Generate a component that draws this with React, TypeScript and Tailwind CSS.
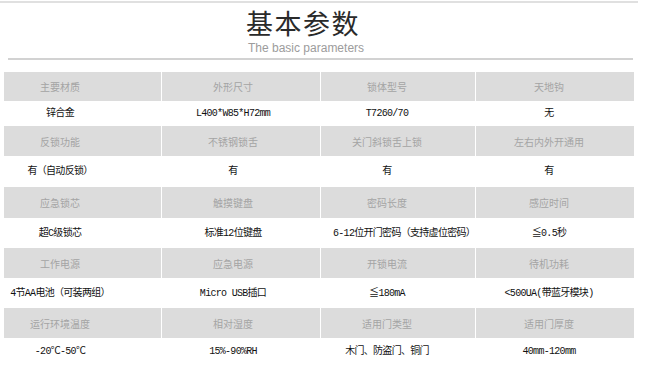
import { Fragment } from 'react';

const rows: string[][][] = [
	[
		['主要材质', '外形尺寸', '锁体型号', '天地钩'],
		['锌合金', 'L400*W85*H72mm', 'T7260/70', '无'],
	],
	[
		['反锁功能', '不锈钢锁舌', '关门斜锁舌上锁', '左右内外开通用'],
		['有（自动反锁）', '有', '有', '有'],
	],
	[
		['应急锁芯', '触摸键盘', '密码长度', '感应时间'],
		['超C级锁芯', '标准12位键盘', '6-12位开门密码（支持虚位密码）', '≦0.5秒'],
	],
	[
		['工作电源', '应急电源', '开锁电流', '待机功耗'],
		['4节AA电池（可装两组）', 'Micro USB插口', '≦180mA', '<500UA(带蓝牙模块)'],
	],
	[
		['运行环境温度', '相对湿度', '适用门类型', '适用门厚度'],
		['-20℃-50℃', '15%-90%RH', '木门、防盗门、铜门', '40mm-120mm'],
	],
];

const headH = ['h-[29px]', 'h-[30px]', 'h-[31px]', 'h-[30px]', 'h-[30px]'];
const valH = ['h-[25px]', 'h-[31px]', 'h-[30px]', 'h-[30px]', 'h-[27px]'];
const colPad = ['pr-[45px]', 'pr-[16px]', 'pr-[22px]', 'pr-[12px]'];

export default function App() {
	return (
		<div className="w-[650px] h-[365px] overflow-hidden bg-white">
			<div className="mt-[1px] h-[2px] w-[638px] bg-[#e0e0e0]" />
			<div
				className="mt-[6px] pl-[246px] text-[27px] leading-[27px] tracking-[1.5px] text-[#2a2a2a]"
				style={{ fontFamily: '"Noto Sans CJK SC", sans-serif' }}
			>
				基本参数
			</div>
			<div
				className="mt-[6px] pl-[248px] text-[12px] leading-[12px] text-[#9c9c9c]"
				style={{ fontFamily: '"Liberation Sans", sans-serif' }}
			>
				The basic parameters
			</div>
			<div className="ml-[8px] mt-[4px] h-[2px] w-[625px] bg-[#d2d2d2]" />
			<div className="mt-[12px] pl-[4px] grid grid-cols-[157px_158px_154px_158px] gap-x-[1px]">
				{rows.map((pair, r) => (
					<Fragment key={r}>
						{pair[0].map((t, c) => (
							<div
								key={'h' + c}
								className={`${headH[r]} ${colPad[c]} flex items-center justify-center bg-[#dcdcdc] text-[10px] text-[#a4a4a4] whitespace-nowrap`}
								style={{ fontFamily: '"Noto Sans CJK SC", sans-serif' }}
							>
								{t}
							</div>
						))}
						{pair[1].map((t, c) => (
							<div
								key={'v' + c}
								className={`${valH[r]} ${r === 2 && c === 2 ? 'pl-[12px] justify-start' : colPad[c] + ' justify-center'} flex items-center text-[10px] tracking-[-0.7px] text-[#111] whitespace-nowrap`}
								style={{ fontFamily: '"Liberation Mono", "Noto Sans CJK SC", monospace' }}
							>
								{t}
							</div>
						))}
					</Fragment>
				))}
			</div>
		</div>
	);
}
